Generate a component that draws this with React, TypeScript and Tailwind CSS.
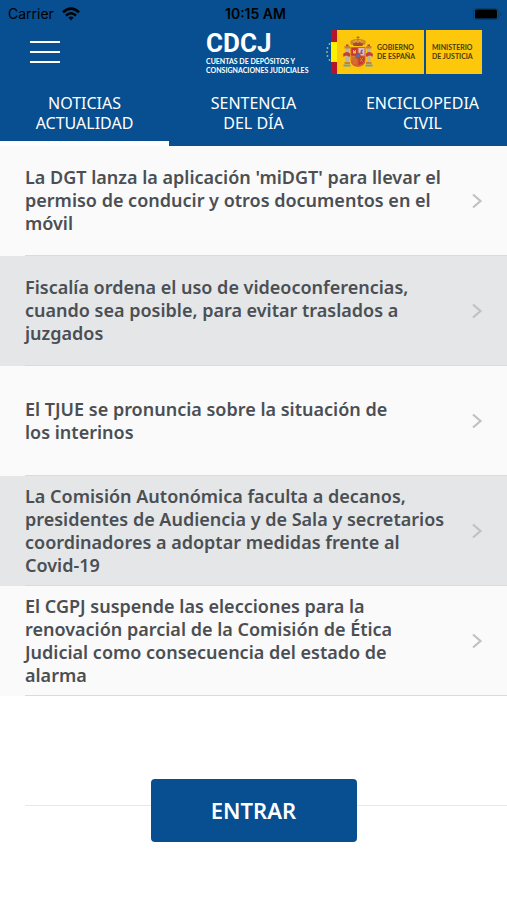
import { useState } from "react";

type NewsItem = {
  id: number;
  title: string;
};

const tabs = ["NOTICIAS\nACTUALIDAD", "SENTENCIA\nDEL DÍA", "ENCICLOPEDIA\nCIVIL"];

const news: NewsItem[] = [
  {
    id: 1,
    title: "La DGT lanza la aplicación 'miDGT' para llevar el\npermiso de conducir y otros documentos en el\nmóvil",
  },
  {
    id: 2,
    title: "Fiscalía ordena el uso de videoconferencias,\ncuando sea posible, para evitar traslados a\njuzgados",
  },
  {
    id: 3,
    title: "El TJUE se pronuncia sobre la situación de\nlos interinos",
  },
  {
    id: 4,
    title:
      "La Comisión Autonómica faculta a decanos,\npresidentes de Audiencia y de Sala y secretarios\ncoordinadores a adoptar medidas frente al\nCovid-19",
  },
  {
    id: 5,
    title:
      "El CGPJ suspende las elecciones para la\nrenovación parcial de la Comisión de Ética\nJudicial como consecuencia del estado de\nalarma",
  },
];

function StatusBar() {
  return (
    <div className="grid grid-cols-3 items-center h-7 pl-2 pr-1 text-black font-['Inter','Liberation_Sans',sans-serif] text-sm">
      <div className="flex items-center gap-2">
        <span>Carrier</span>
        <svg viewBox="0 0 18 14" className="w-[18px] h-[14px]" fill="none" stroke="currentColor" strokeWidth="2.6">
          <path d="M1 5.2Q9 -2 17 5.2" />
          <path d="M4 8.5Q9 4 14 8.5" />
          <path d="M6.4 10.6Q9 8.4 11.6 10.6L9 13.6Z" fill="currentColor" stroke="none" />
        </svg>
      </div>
      <span className="text-center font-semibold">10:15 AM</span>
      <svg viewBox="0 0 30 12" className="w-[30px] h-3 justify-self-end">
        <rect x="0.5" y="0.5" width="25" height="11" rx="3" fill="none" stroke="#06406f" />
        <rect x="2" y="1.5" width="22" height="9" rx="1.5" fill="#000" />
        <path d="M27 4Q30 6 27 8Z" fill="#06406f" />
      </svg>
    </div>
  );
}

function Shield() {
  return (
    <svg viewBox="0 0 30 32" className="w-[30px] h-8 shrink-0">
      {/* crown */}
      <path d="M8.5 9Q5.5 5 9 4Q12 2.5 15 3Q18 2.5 21 4Q24.5 5 21.5 9Z" fill="#c98a2c" />
      <path d="M10 7Q15 5 20 7L19.5 10H10.5Z" fill="#b5452f" />
      <path d="M15 0V4M13.5 1.5H16.5" stroke="#a87522" strokeWidth="1" />
      <path d="M10 5L11.5 7L13 4L15 7L17 4L18.5 7L20 5" fill="none" stroke="#e8b84e" strokeWidth="0.7" />
      {/* pillars */}
      <path d="M2.5 12H6V27H2.5ZM24 12H27.5V27H24Z" fill="#b9b6a4" />
      <path d="M1.5 10H7V12.5H1.5ZM23 10H28.5V12.5H23Z" fill="#c9812c" />
      <path d="M3 8.5H5.5V10H3ZM24.5 8.5H27V10H24.5Z" fill="#b5452f" />
      <path d="M1.5 26H7V28H1.5ZM23 26H28.5V28H23Z" fill="#c9812c" />
      <path d="M0.5 28.5H7.5V30.5H0.5ZM22.5 28.5H29.5V30.5H22.5Z" fill="#6d9abb" />
      <path d="M0 18Q4 14 7.5 18L6.5 21Q3 18 0.5 21ZM30 18Q26 14 22.5 18L23.5 21Q27 18 29.5 21Z" fill="#c63f34" />
      {/* quarters */}
      <path d="M7.5 11H22.5V24Q22.5 30 15 31Q7.5 30 7.5 24Z" fill="#d5602e" />
      <path d="M8.5 12H14.5V19.5H8.5Z" fill="#c8362f" />
      <path d="M10 17.5V14H11V15H12V14H13V17.5Z" fill="#edbd3c" />
      <path d="M15.5 12H21.5V19.5H15.5Z" fill="#d8bdc4" />
      <path d="M17 18L18 14L20 13.5L19 16L20 18Z" fill="#8f5688" />
      <path d="M8.5 20.5H14.5V29Q9 28 8.5 24Z" fill="#e09a2e" />
      <path d="M10 21V27M12 21V28.5M14 21V29" stroke="#c8362f" strokeWidth="0.9" />
      <path d="M15.5 20.5H21.5V24Q21 28 15.5 29Z" fill="#c8362f" />
      <path d="M17 21.5L20 26M20 21.5L17 26" stroke="#dd9b35" strokeWidth="0.7" />
      <ellipse cx="15" cy="19.8" rx="2.3" ry="2.8" fill="#56709f" stroke="#c8362f" strokeWidth="0.8" />
    </svg>
  );
}

function GovernmentLogo() {
  return (
    <div className="flex items-center h-11 text-[7px] leading-[9px] font-bold text-[#4a3b08] font-['Lato',sans-serif]">
      <svg viewBox="0 0 11 44" className="w-[11px] h-11">
        <g fill="#a9b77a">
          <circle cx="3.5" cy="14" r="0.9" />
          <circle cx="1.5" cy="18" r="0.9" />
          <circle cx="1" cy="22" r="0.9" />
          <circle cx="1.5" cy="26" r="0.9" />
          <circle cx="3.5" cy="30" r="0.9" />
        </g>
        <rect x="5" width="6" height="44" fill="#b5152b" />
        <rect x="5" y="12" width="6" height="20" fill="#fff000" />
      </svg>
      <div className="flex items-center gap-1 h-full w-[87px] pl-1.5 bg-[#fdc70c]">
        <Shield />
        <span className="whitespace-pre">{"GOBIERNO\nDE ESPAÑA"}</span>
      </div>
      <div className="flex items-center h-full w-14 ml-0.5 pl-1.5 bg-[#fdc70c]">
        <span className="whitespace-pre">{"MINISTERIO\nDE JUSTICIA"}</span>
      </div>
    </div>
  );
}

export default function App() {
  const [activeTab, setActiveTab] = useState(0);

  return (
    <div className="min-h-screen bg-white font-['Noto_Sans',sans-serif]">
      <header className="bg-[#074f90] text-white">
        <StatusBar />
        <div className="grid grid-cols-[1fr_auto_1fr] items-center h-12 pl-[30px] pr-[25px]">
          <button aria-label="Menú" className="flex flex-col gap-2 w-[30px]">
            <span className="h-0.5 w-full bg-white" />
            <span className="h-0.5 w-full bg-white" />
            <span className="h-0.5 w-full bg-white" />
          </button>
          <div className="w-[100px]">
            <h1 className="text-[26px] leading-7 font-bold font-['Roboto',sans-serif]">CDCJ</h1>
            <p className="text-[7px] leading-[9px] font-bold whitespace-pre font-['Lato',sans-serif]">
              {"CUENTAS DE DEPÓSITOS Y\nCONSIGNACIONES JUDICIALES"}
            </p>
          </div>
          <div className="justify-self-end">
            <GovernmentLogo />
          </div>
        </div>

        {/* Tabs */}
        <nav className="grid grid-cols-3 pt-[17px]">
          {tabs.map((tab, index) => (
            <button
              key={tab}
              onClick={() => setActiveTab(index)}
              className={`pb-2 border-b-[5px] text-base leading-5 whitespace-pre-line ${
                activeTab === index ? "border-white" : "border-[#074f90]"
              }`}
            >
              {tab}
            </button>
          ))}
        </nav>
      </header>

      {/* News list */}
      <ul>
        {news.map((item) => (
          <li key={item.id} className="bg-[#fafafa] even:bg-[#e4e6e8]">
            <a href="#" className="flex flex-col min-h-[110px] text-[#4b4f54]">
              <div className="flex flex-1 items-center justify-between pl-[25px] pr-6">
                <span className="text-lg leading-[23px] font-semibold whitespace-pre-line">{item.title}</span>
                <svg viewBox="0 0 12 16" className="w-3 h-4 shrink-0" fill="none" stroke="#bfc1c4" strokeWidth="2.2">
                  <path d="M2 1.5L9.5 8L2 14.5" />
                </svg>
              </div>
              <div className="h-px ml-[25px] bg-[#d9dbdd]" />
            </a>
          </li>
        ))}
      </ul>

      <div className="relative flex justify-center pt-[83px] pb-14">
        <div className="absolute left-[25px] right-0 top-[109px] h-px bg-[#e8e8e8]" />
        <button className="relative w-[206px] h-[63px] rounded bg-[#074f90] text-white text-[22px] font-semibold">
          ENTRAR
        </button>
      </div>
    </div>
  );
}
